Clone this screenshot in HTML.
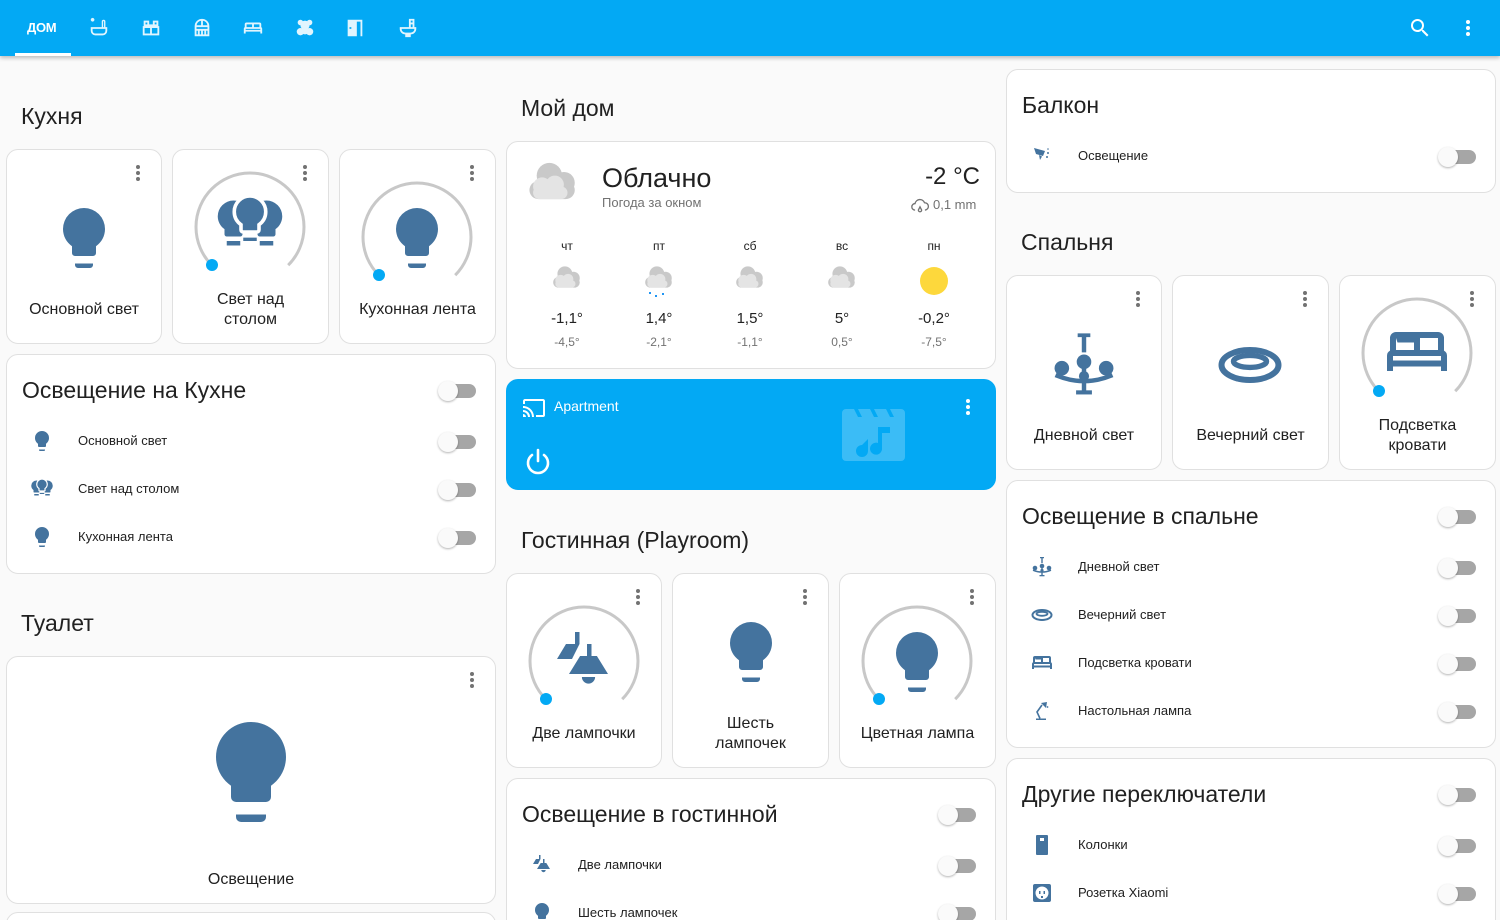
<!DOCTYPE html>
<html style="overflow:hidden;height:920px"><head><meta charset="utf-8">
<style>
*{box-sizing:border-box;margin:0;padding:0}
body{width:1500px;height:920px;overflow:hidden;background:#fafafa;font-family:"Liberation Sans",sans-serif;color:#212121;position:relative}
.a{position:absolute}
.hdr{left:0;top:0;width:1500px;height:56px;background:#03a9f4;box-shadow:0 2px 4px rgba(0,0,0,.25);z-index:5}
.card{position:absolute;background:#fff;border:1px solid #e0e0e0;border-radius:12px;overflow:hidden}
.h{position:absolute;font-size:23px;line-height:28px;color:#212121}
.t{position:absolute;font-size:23px;line-height:28px}
.nm{position:absolute;text-align:center;font-size:16px;line-height:20px;color:#212121}
.row{position:absolute;font-size:13px;line-height:16px;color:#212121}
.tg{position:absolute;width:36px;height:14px;border-radius:7px;background:#a6a6a6}
.tg:after{content:"";position:absolute;left:-2px;top:-3px;width:20px;height:20px;border-radius:50%;background:#fafafa;box-shadow:0 1px 2px rgba(0,0,0,.3)}
.dots{position:absolute;width:4px;height:16px}
.dots i{display:block;width:4px;height:4px;border-radius:50%;background:#727272;margin-bottom:2px}
svg.ic{position:absolute;fill:#44739e}
.hi{position:absolute;fill:#e1f5fe}
.w{position:absolute;text-align:center;width:60px}
</style></head><body>
<svg width="0" height="0" style="position:absolute">
<defs>
<symbol id="bulb" viewBox="0 0 24 24"><path d="M12,2A7,7 0 0,0 5,9C5,11.38 6.19,13.47 8,14.74V17A1,1 0 0,0 9,18H15A1,1 0 0,0 16,17V14.74C17.81,13.47 19,11.38 19,9A7,7 0 0,0 12,2M9,20.5V21A1,1 0 0,0 10,22H14A1,1 0 0,0 15,21V20.5Z"/></symbol>
<symbol id="bulbs" viewBox="0 0 24 24"><g transform="translate(-2.5,2) scale(.75)"><path d="M12,2A7,7 0 0,0 5,9C5,11.38 6.19,13.47 8,14.74V17A1,1 0 0,0 9,18H15A1,1 0 0,0 16,17V14.74C17.81,13.47 19,11.38 19,9A7,7 0 0,0 12,2M9,20V22H15V20Z"/></g><g transform="translate(8.5,2) scale(.75)"><path d="M12,2A7,7 0 0,0 5,9C5,11.38 6.19,13.47 8,14.74V17A1,1 0 0,0 9,18H15A1,1 0 0,0 16,17V14.74C17.81,13.47 19,11.38 19,9A7,7 0 0,0 12,2M9,20V22H15V20Z"/></g><g transform="translate(3,0.5) scale(.75)"><path stroke="#fff" stroke-width="1.6" d="M12,2A7,7 0 0,0 5,9C5,11.38 6.19,13.47 8,14.74V17A1,1 0 0,0 9,18H15A1,1 0 0,0 16,17V14.74C17.81,13.47 19,11.38 19,9A7,7 0 0,0 12,2"/><path d="M9,20.5V22H15V20.5Z"/></g></symbol>
<symbol id="chand" viewBox="0 0 24 24"><path d="M10,2H14V3.2H12.7V8H11.3V3.2H10Z"/><circle cx="12" cy="11" r="2.3"/><circle cx="5" cy="13" r="2.3"/><circle cx="19" cy="13" r="2.3"/><circle cx="12" cy="15.5" r="1.6"/><path d="M11.3,13H12.7V20.5H11.3Z"/><path d="M3,15.2Q12,19 21,15.2" stroke="#44739e" stroke-width="1.4" fill="none"/><path d="M9.5,20H14.5V21.3H9.5Z"/></symbol>
<symbol id="oval" viewBox="0 0 24 24"><ellipse cx="12" cy="12" rx="9.5" ry="5" fill="none" stroke="#44739e" stroke-width="2"/><ellipse cx="12" cy="10.8" rx="5.5" ry="2" fill="none" stroke="#44739e" stroke-width="1.8"/></symbol>
<symbol id="bed" viewBox="0 0 24 24"><path fill-rule="evenodd" d="M5,5H19A2,2 0 0,1 21,7V11.2A2,2 0 0,1 22,13V18H20V16.5H4V18H2V13A2,2 0 0,1 3,11.2V7A2,2 0 0,1 5,5ZM5,7V11H11V8.5H5.5ZM13,8.5V11H19V7H13ZM4,13V14.5H20V13Z"/></symbol>
<symbol id="track" viewBox="0 0 24 24"><path d="M9,2H10.5V6L8,11H3L6,6H9Z"/><path d="M13,6H14.5V10H16.3L20,16H7L10.7,10H13Z"/><path d="M11.3,17H15.7A2.2,2.2 0 0,1 11.3,17Z"/></symbol>
<symbol id="hang" viewBox="0 0 24 24"><path d="M4,4L15,7L13,12L6,10Z"/><path d="M9,11L12,12.5L10,16Z"/><circle cx="18" cy="9" r="1"/><circle cx="17" cy="13" r="1"/><circle cx="18" cy="5" r="0.8"/></symbol>
<symbol id="desk" viewBox="0 0 24 24"><path d="M6,21V19.5H16V21Z"/><path d="M10,19.5L7,13L12,6" stroke="#44739e" stroke-width="1.6" fill="none"/><path d="M11,4L17,3L16,9Z"/><circle cx="17.5" cy="8" r=".9"/></symbol>
<symbol id="spk" viewBox="0 0 24 24"><path fill-rule="evenodd" d="M7,2H17A1,1 0 0,1 18,3V21A1,1 0 0,1 17,22H7A1,1 0 0,1 6,21V3A1,1 0 0,1 7,2ZM10,5V8H14V5Z"/></symbol>
<symbol id="outlet" viewBox="0 0 24 24"><path fill-rule="evenodd" d="M5,3H19A2,2 0 0,1 21,5V19A2,2 0 0,1 19,21H5A2,2 0 0,1 3,19V5A2,2 0 0,1 5,3ZM12,5.5A6.5,6.5 0 1,0 12.01,5.5ZM9,10H10.5V13H9ZM13.5,10H15V13H13.5ZM11,15H13V17H11Z"/></symbol>
<symbol id="cloud" viewBox="0 0 64 48"><circle cx="28" cy="18" r="14" fill="#c9c9c9"/><circle cx="44" cy="26" r="12" fill="#c9c9c9"/><rect x="6" y="24" width="50" height="20" rx="10" fill="#c9c9c9"/><circle cx="20" cy="30" r="10" fill="#e4e4e4"/><circle cx="34" cy="28" r="10" fill="#e4e4e4"/><rect x="10" y="30" width="38" height="14" rx="7" fill="#e4e4e4"/></symbol>
</defs></svg>

<div class="a hdr">
<div class="a" style="left:27px;top:20px;color:#fff;font-weight:bold;font-size:13px;letter-spacing:-.3px">ДОМ</div>
<div class="a" style="left:15px;top:53px;width:56px;height:3px;background:#fff"></div>
<svg class="hi" style="left:88px;top:17px" width="22" height="22" viewBox="0 0 24 24"><path d="M5,5A2,2 0 1,1 5.01,5ZM3,11H21V15A5,5 0 0,1 16,20H8A5,5 0 0,1 3,15ZM5,13V15A3,3 0 0,0 8,18H16A3,3 0 0,0 19,15V13ZM15,11V5A2,2 0 0,1 19,5V11H17.5V5A.5.5 0 0,0 16.5,5V11Z"/></svg>
<svg class="hi" style="left:140px;top:17px" width="22" height="22" viewBox="0 0 24 24"><path d="M4,4H10V8H14V4H20V10H21V20H3V10H4ZM6,6V8H8V6ZM16,6V8H18V6ZM5,12V18H11V12ZM13,12V18H19V12ZM5,10H19V10Z"/></svg>
<svg class="hi" style="left:191px;top:17px" width="22" height="22" viewBox="0 0 24 24"><path d="M12,2A8,8 0 0,0 4,10V21H20V10A8,8 0 0,0 12,2ZM11,4.1V9H6.1A6,6 0 0,1 11,4.1ZM13,4.1A6,6 0 0,1 17.9,9H13ZM6,11H18V13H6ZM6,15H7.5V19H6ZM9.5,15H11V19H9.5ZM13,15H14.5V19H13ZM16.5,15H18V19H16.5Z"/></svg>
<svg class="hi" style="left:242px;top:17px" width="22" height="22" viewBox="0 0 24 24"><path d="M5,6H19A2,2 0 0,1 21,8V11A2,2 0 0,1 22,13V18H20V16H4V18H2V13A2,2 0 0,1 3,11V8A2,2 0 0,1 5,6ZM5,8V11H11V8ZM13,8V11H19V8ZM4,13V14H20V13Z"/></svg>
<svg class="hi" style="left:294px;top:17px" width="22" height="22" viewBox="0 0 24 24"><circle cx="7" cy="6" r="3"/><circle cx="17" cy="6" r="3"/><circle cx="12" cy="9" r="5"/><circle cx="7" cy="16" r="4"/><circle cx="17" cy="16" r="4"/><circle cx="12" cy="15" r="4"/></svg>
<svg class="hi" style="left:344px;top:17px" width="22" height="22" viewBox="0 0 24 24"><path d="M4,3H20V21H18V5H14V21H4ZM6,11V13H8V11Z"/></svg>
<svg class="hi" style="left:397px;top:17px" width="22" height="22" viewBox="0 0 24 24"><path d="M13,2H19V11H21V13A6,6 0 0,1 15,19V22H9V19A6,6 0 0,1 3,13V11H13ZM15,4V11H17V4ZM15,6H17V8H15ZM5,13A4,4 0 0,0 9,17H15A4,4 0 0,0 19,13Z"/></svg>
<svg class="hi" style="left:1408px;top:16px;fill:#fff" width="24" height="24" viewBox="0 0 24 24"><path d="M9.5,3A6.5,6.5 0 0,1 16,9.5C16,11.11 15.41,12.59 14.44,13.730L14.71,14H15.5L20.5,19L19,20.5L14,15.5V14.71L13.73,14.44C12.59,15.41 11.11,16 9.5,16A6.5,6.5 0 0,1 3,9.5A6.5,6.5 0 0,1 9.5,3M9.5,5C7,5 5,7 5,9.5C5,12 7,14 9.5,14C12,14 14,12 14,9.5C14,7 12,5 9.5,5Z"/></svg>
<div class="dots" style="left:1466px;top:20px"><i style="background:#fff"></i><i style="background:#fff"></i><i style="background:#fff"></i></div>
</div>

<div class="h" style="left:21px;top:102px">Кухня</div>
<div class="card" style="left:6px;top:149px;width:156px;height:195px"></div>
<div class="card" style="left:172px;top:149px;width:157px;height:195px"></div>
<div class="card" style="left:339px;top:149px;width:157px;height:195px"></div>
<div class="dots" style="left:136px;top:165px"><i></i><i></i><i></i></div>
<div class="dots" style="left:303px;top:165px"><i></i><i></i><i></i></div>
<div class="dots" style="left:470px;top:165px"><i></i><i></i><i></i></div>
<svg class="ic" style="left:48px;top:202px" width="72" height="72"><use href="#bulb"/></svg>
<svg class="a" style="left:192px;top:169px" width="116" height="116"><path d="M19.8,96.2A54,54 0 1,1 96.2,96.2" fill="none" stroke="#c8c8c8" stroke-width="3"/><circle cx="20" cy="96" r="6" fill="#03a9f4"/></svg>
<svg class="ic" style="left:214px;top:190px" width="72" height="72"><use href="#bulbs"/></svg>
<svg class="a" style="left:359px;top:179px" width="116" height="116"><path d="M19.8,96.2A54,54 0 1,1 96.2,96.2" fill="none" stroke="#c8c8c8" stroke-width="3"/><circle cx="20" cy="96" r="6" fill="#03a9f4"/></svg>
<svg class="ic" style="left:381px;top:202px" width="72" height="72"><use href="#bulb"/></svg>
<div class="nm" style="left:6px;top:300px;width:156px">Основной свет</div>
<div class="nm" style="left:172px;top:290px;width:157px">Свет над<br>столом</div>
<div class="nm" style="left:339px;top:300px;width:157px">Кухонная лента</div>

<div class="card" style="left:6px;top:354px;width:490px;height:220px"></div>
<div class="t" style="left:22px;top:376px">Освещение на Кухне</div>
<div class="tg" style="left:440px;top:384px"></div>
<svg class="ic" style="left:30px;top:429px" width="24" height="24"><use href="#bulb"/></svg>
<div class="row" style="left:78px;top:433px">Основной свет</div><div class="tg" style="left:440px;top:435px"></div>
<svg class="ic" style="left:30px;top:477px" width="24" height="24"><use href="#bulbs"/></svg>
<div class="row" style="left:78px;top:481px">Свет над столом</div><div class="tg" style="left:440px;top:483px"></div>
<svg class="ic" style="left:30px;top:525px" width="24" height="24"><use href="#bulb"/></svg>
<div class="row" style="left:78px;top:529px">Кухонная лента</div><div class="tg" style="left:440px;top:531px"></div>

<div class="h" style="left:21px;top:609px">Туалет</div>
<div class="card" style="left:6px;top:656px;width:490px;height:248px"></div>
<div class="dots" style="left:470px;top:672px"><i></i><i></i><i></i></div>
<svg class="ic" style="left:191px;top:712px" width="120" height="120"><use href="#bulb"/></svg>
<div class="nm" style="left:6px;top:870px;width:490px">Освещение</div>
<div class="card" style="left:6px;top:912px;width:490px;height:40px"></div>

<div class="h" style="left:521px;top:94px">Мой дом</div>
<div class="card" style="left:506px;top:141px;width:490px;height:228px"></div>
<svg class="a" style="left:524px;top:158px" width="58" height="46"><use href="#cloud"/></svg>
<div class="a" style="left:602px;top:162px;font-size:27px;line-height:32px">Облачно</div>
<div class="a" style="left:602px;top:195px;font-size:13px;color:#727272">Погода за окном</div>
<div class="a" style="left:880px;top:162px;width:100px;text-align:right;font-size:24px;line-height:30px">-2 °C</div>
<svg class="a" style="left:910px;top:197px;fill:none;stroke:#727272;stroke-width:1.6" width="20" height="18" viewBox="0 0 24 22"><path d="M6,16A4,4 0 0,1 6,8A6,6 0 0,1 17.5,7A4.5,4.5 0 0,1 18,16"/><path d="M12,12L14,16A2,2 0 0,1 10,16Z"/></svg>
<div class="a" style="left:933px;top:197px;font-size:13px;color:#727272">0,1 mm</div>
<div class="w" style="left:537px;top:239px;font-size:12px">чт</div>
<div class="w" style="left:629px;top:239px;font-size:12px">пт</div>
<div class="w" style="left:720px;top:239px;font-size:12px">сб</div>
<div class="w" style="left:812px;top:239px;font-size:12px">вс</div>
<div class="w" style="left:904px;top:239px;font-size:12px">пн</div>
<svg class="a" style="left:550px;top:264px" width="34" height="26"><use href="#cloud"/></svg>
<svg class="a" style="left:642px;top:264px" width="34" height="26"><use href="#cloud"/></svg>
<div class="a" style="left:649px;top:292px;width:2px;height:2px;background:#2196f3"></div><div class="a" style="left:655px;top:295px;width:2px;height:2px;background:#2196f3"></div><div class="a" style="left:662px;top:293px;width:2px;height:2px;background:#2196f3"></div>
<svg class="a" style="left:733px;top:264px" width="34" height="26"><use href="#cloud"/></svg>
<svg class="a" style="left:825px;top:264px" width="34" height="26"><use href="#cloud"/></svg>
<div class="a" style="left:920px;top:267px;width:28px;height:28px;border-radius:50%;background:#fdd83c"></div>
<div class="w" style="left:537px;top:310px;font-size:15px">-1,1°</div>
<div class="w" style="left:629px;top:310px;font-size:15px">1,4°</div>
<div class="w" style="left:720px;top:310px;font-size:15px">1,5°</div>
<div class="w" style="left:812px;top:310px;font-size:15px">5°</div>
<div class="w" style="left:904px;top:310px;font-size:15px">-0,2°</div>
<div class="w" style="left:537px;top:335px;font-size:12px;color:#727272">-4,5°</div>
<div class="w" style="left:629px;top:335px;font-size:12px;color:#727272">-2,1°</div>
<div class="w" style="left:720px;top:335px;font-size:12px;color:#727272">-1,1°</div>
<div class="w" style="left:812px;top:335px;font-size:12px;color:#727272">0,5°</div>
<div class="w" style="left:904px;top:335px;font-size:12px;color:#727272">-7,5°</div>

<div class="card" style="left:506px;top:379px;width:490px;height:111px;background:#03a9f4;border-color:#03a9f4"></div>
<svg class="a" style="left:522px;top:396px;fill:#fff" width="24" height="22" viewBox="0 0 24 22"><path d="M1,18V21H4A3,3 0 0,0 1,18M1,14V16A5,5 0 0,1 6,21H8A7,7 0 0,0 1,14M1,10V12A9,9 0 0,1 10,21H12C12,14.92 7.07,10 1,10M21,3H3C1.89,3 1,3.89 1,5V8H3V5H21V19H14V21H21A2,2 0 0,0 23,19V5C23,3.89 22.1,3 21,3Z"/></svg>
<div class="a" style="left:554px;top:398px;font-size:14px;color:#fff">Apartment</div>
<div class="dots" style="left:966px;top:399px"><i style="background:#fff"></i><i style="background:#fff"></i><i style="background:#fff"></i></div>
<svg class="a" style="left:524px;top:447px;fill:none;stroke:#fff;stroke-width:2.6;stroke-linecap:round" width="28" height="30" viewBox="0 0 28 30"><path d="M14,3V14"/><path d="M8,8A10,10 0 1,0 20,8"/></svg>
<svg class="a" style="left:842px;top:409px;opacity:.22;fill:#fff" width="63" height="52" viewBox="0 0 63 52"><path fill-rule="evenodd" d="M4,0H12L16,8H20L16,0H28L32,8H36L32,0H44L48,8H52L48,0H59A4,4 0 0,1 63,4V48A4,4 0 0,1 59,52H4A4,4 0 0,1 0,48V4A4,4 0 0,1 4,0ZM36,18V34A6,6 0 1,0 40,39V24H48V18ZM20,36A6,6 0 1,0 26,42V30Z"/></svg>

<div class="h" style="left:521px;top:526px">Гостинная (Playroom)</div>
<div class="card" style="left:506px;top:573px;width:156px;height:195px"></div>
<div class="card" style="left:672px;top:573px;width:157px;height:195px"></div>
<div class="card" style="left:839px;top:573px;width:157px;height:195px"></div>
<div class="dots" style="left:636px;top:589px"><i></i><i></i><i></i></div>
<div class="dots" style="left:803px;top:589px"><i></i><i></i><i></i></div>
<div class="dots" style="left:970px;top:589px"><i></i><i></i><i></i></div>
<svg class="a" style="left:526px;top:603px" width="116" height="116"><path d="M19.8,96.2A54,54 0 1,1 96.2,96.2" fill="none" stroke="#c8c8c8" stroke-width="3"/><circle cx="20" cy="96" r="6" fill="#03a9f4"/></svg>
<svg class="ic" style="left:548px;top:626px" width="72" height="72"><use href="#track"/></svg>
<svg class="ic" style="left:715px;top:616px" width="72" height="72"><use href="#bulb"/></svg>
<svg class="a" style="left:859px;top:603px" width="116" height="116"><path d="M19.8,96.2A54,54 0 1,1 96.2,96.2" fill="none" stroke="#c8c8c8" stroke-width="3"/><circle cx="20" cy="96" r="6" fill="#03a9f4"/></svg>
<svg class="ic" style="left:881px;top:626px" width="72" height="72"><use href="#bulb"/></svg>
<div class="nm" style="left:506px;top:724px;width:156px">Две лампочки</div>
<div class="nm" style="left:672px;top:714px;width:157px">Шесть<br>лампочек</div>
<div class="nm" style="left:839px;top:724px;width:157px">Цветная лампа</div>

<div class="card" style="left:506px;top:778px;width:490px;height:160px"></div>
<div class="t" style="left:522px;top:800px">Освещение в гостинной</div>
<div class="tg" style="left:940px;top:808px"></div>
<svg class="ic" style="left:530px;top:853px" width="24" height="24"><use href="#track"/></svg>
<div class="row" style="left:578px;top:857px">Две лампочки</div><div class="tg" style="left:940px;top:859px"></div>
<svg class="ic" style="left:530px;top:901px" width="24" height="24"><use href="#bulb"/></svg>
<div class="row" style="left:578px;top:905px">Шесть лампочек</div><div class="tg" style="left:940px;top:907px"></div>

<div class="card" style="left:1006px;top:69px;width:490px;height:124px"></div>
<div class="t" style="left:1022px;top:91px">Балкон</div>
<svg class="ic" style="left:1030px;top:144px" width="24" height="24"><use href="#hang"/></svg>
<div class="row" style="left:1078px;top:148px">Освещение</div><div class="tg" style="left:1440px;top:150px"></div>

<div class="h" style="left:1021px;top:228px">Спальня</div>
<div class="card" style="left:1006px;top:275px;width:156px;height:195px"></div>
<div class="card" style="left:1172px;top:275px;width:157px;height:195px"></div>
<div class="card" style="left:1339px;top:275px;width:157px;height:195px"></div>
<div class="dots" style="left:1136px;top:291px"><i></i><i></i><i></i></div>
<div class="dots" style="left:1303px;top:291px"><i></i><i></i><i></i></div>
<div class="dots" style="left:1470px;top:291px"><i></i><i></i><i></i></div>
<svg class="ic" style="left:1046px;top:327px" width="76" height="76"><use href="#chand"/></svg>
<svg class="ic" style="left:1214px;top:329px" width="72" height="72"><use href="#oval"/></svg>
<svg class="a" style="left:1359px;top:295px" width="116" height="116"><path d="M19.8,96.2A54,54 0 1,1 96.2,96.2" fill="none" stroke="#c8c8c8" stroke-width="3"/><circle cx="20" cy="96" r="6" fill="#03a9f4"/></svg>
<svg class="ic" style="left:1381px;top:317px" width="72" height="72"><use href="#bed"/></svg>
<div class="nm" style="left:1006px;top:426px;width:156px">Дневной свет</div>
<div class="nm" style="left:1172px;top:426px;width:157px">Вечерний свет</div>
<div class="nm" style="left:1339px;top:416px;width:157px">Подсветка<br>кровати</div>

<div class="card" style="left:1006px;top:480px;width:490px;height:268px"></div>
<div class="t" style="left:1022px;top:502px">Освещение в спальне</div>
<div class="tg" style="left:1440px;top:510px"></div>
<svg class="ic" style="left:1030px;top:555px" width="24" height="24"><use href="#chand"/></svg>
<div class="row" style="left:1078px;top:559px">Дневной свет</div><div class="tg" style="left:1440px;top:561px"></div>
<svg class="ic" style="left:1030px;top:603px" width="24" height="24"><use href="#oval"/></svg>
<div class="row" style="left:1078px;top:607px">Вечерний свет</div><div class="tg" style="left:1440px;top:609px"></div>
<svg class="ic" style="left:1030px;top:651px" width="24" height="24"><use href="#bed"/></svg>
<div class="row" style="left:1078px;top:655px">Подсветка кровати</div><div class="tg" style="left:1440px;top:657px"></div>
<svg class="ic" style="left:1030px;top:699px" width="24" height="24"><use href="#desk"/></svg>
<div class="row" style="left:1078px;top:703px">Настольная лампа</div><div class="tg" style="left:1440px;top:705px"></div>

<div class="card" style="left:1006px;top:758px;width:490px;height:180px"></div>
<div class="t" style="left:1022px;top:780px">Другие переключатели</div>
<div class="tg" style="left:1440px;top:788px"></div>
<svg class="ic" style="left:1030px;top:833px" width="24" height="24"><use href="#spk"/></svg>
<div class="row" style="left:1078px;top:837px">Колонки</div><div class="tg" style="left:1440px;top:839px"></div>
<svg class="ic" style="left:1030px;top:881px" width="24" height="24"><use href="#outlet"/></svg>
<div class="row" style="left:1078px;top:885px">Розетка Xiaomi</div><div class="tg" style="left:1440px;top:887px"></div>
</body></html>
